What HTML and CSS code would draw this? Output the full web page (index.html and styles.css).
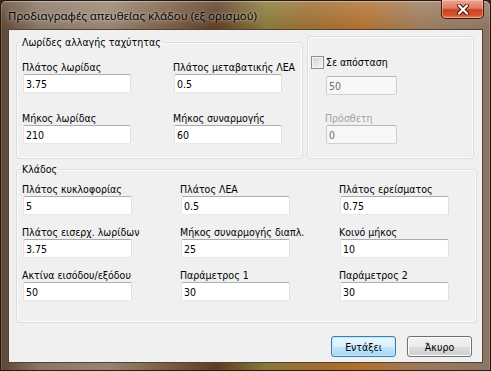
FILE: index.html
```html
<!DOCTYPE html>
<html lang="el">
<head>
    <meta charset="UTF-8">
    <title>Προδιαγραφές απευθείας κλάδου</title>
    <link rel="stylesheet" href="styles.css">
</head>
<body>
    <div class="window">

        <div class="titlebar">
            <span class="title">Προδιαγραφές απευθείας κλάδου (εξ ορισμού)</span>
            <button class="close" type="button">
                <svg width="12" height="11" viewBox="0 0 12 11">
                    <path d="M2 1.5 L10 9.5 M10 1.5 L2 9.5" stroke="#4a1208" stroke-width="4" stroke-linecap="round"/>
                    <path d="M2 1.5 L10 9.5 M10 1.5 L2 9.5" stroke="#ffffff" stroke-width="2.2" stroke-linecap="round"/>
                </svg>
            </button>
        </div>

        <form class="client">

            <div class="top-row">
                <fieldset class="group lanes">
                    <legend>Λωρίδες αλλαγής ταχύτητας</legend>
                    <div class="grid">
                        <label class="field"><span>Πλάτος λωρίδας</span><input type="text" value="3.75"></label>
                        <label class="field"><span>Πλάτος μεταβατικής ΛΕΑ</span><input type="text" value="0.5"></label>
                        <label class="field"><span>Μήκος λωρίδας</span><input type="text" value="210"></label>
                        <label class="field"><span>Μήκος συναρμογής</span><input type="text" value="60"></label>
                    </div>
                </fieldset>

                <fieldset class="group offset">
                    <label class="check"><input type="checkbox"><span>Σε απόσταση</span></label>
                    <input class="dist" type="text" value="50" disabled>
                    <label class="field off"><span>Πρόσθετη</span><input type="text" value="0" disabled></label>
                </fieldset>
            </div>

            <fieldset class="group branch">
                <legend>Κλάδος</legend>
                <div class="grid">
                    <label class="field"><span>Πλάτος κυκλοφορίας</span><input type="text" value="5"></label>
                    <label class="field"><span>Πλάτος ΛΕΑ</span><input type="text" value="0.5"></label>
                    <label class="field"><span>Πλάτος ερείσματος</span><input type="text" value="0.75"></label>
                    <label class="field"><span>Πλάτος εισερχ. λωρίδων</span><input type="text" value="3.75"></label>
                    <label class="field"><span>Μήκος συναρμογής διαπλ.</span><input type="text" value="25"></label>
                    <label class="field"><span>Κοινό μήκος</span><input type="text" value="10"></label>
                    <label class="field"><span>Ακτίνα εισόδου/εξόδου</span><input type="text" value="50"></label>
                    <label class="field"><span>Παράμετρος 1</span><input type="text" value="30"></label>
                    <label class="field"><span>Παράμετρος 2</span><input type="text" value="30"></label>
                </div>
            </fieldset>

            <div class="buttons">
                <button class="btn default" type="button">Εντάξει</button>
                <button class="btn" type="button">Άκυρο</button>
            </div>

        </form>
    </div>
</body>
</html>
```

FILE: styles.css
```css
* {
    box-sizing: border-box;
    margin: 0;
    padding: 0;
}

html,
body {
    width: 491px;
    height: 371px;
    overflow: hidden;
}

body {
    font-family: "DejaVu Sans Condensed", "Liberation Sans", Arial, sans-serif;
    font-size: 10.5px;
    color: #000;
    background: #3a2818;
}

.window {
    width: 491px;
    height: 371px;
    display: flex;
    flex-direction: column;
    border: 1px solid rgba(20, 10, 0, 0.85);
    border-radius: 6px 6px 0 0;
    background:
        linear-gradient(to bottom, rgba(255, 255, 255, 0.18), rgba(255, 255, 255, 0) 28px),
        linear-gradient(90deg, #5e4634 0%, #8a7664 8%, #97836f 22%, #7a5d44 34%, #5c3c24 44%, #867838 54%, #9c6c30 64%, #b0702e 74%, #9a7a5c 86%, #8c7564 100%);
    box-shadow: inset 0 1px 0 rgba(255, 255, 255, 0.35), inset 1px 0 0 rgba(255, 255, 255, 0.15), inset -1px 0 0 rgba(255, 255, 255, 0.15);
}

/* title bar */

.titlebar {
    height: 28px;
    display: flex;
    align-items: flex-start;
    padding-left: 7px;
}

.title {
    margin-top: 7px;
    font-family: "Noto Sans", sans-serif;
    font-size: 11.5px;
    line-height: 15px;
    color: #000;
    text-shadow: 0 0 5px rgba(255, 255, 255, 0.55), 0 0 2px rgba(255, 255, 255, 0.45);
}

.close {
    margin-left: auto;
    margin-right: 6px;
    margin-top: -1px;
    width: 43px;
    height: 19px;
    display: grid;
    place-items: center;
    border: 1px solid #4a140c;
    border-top: none;
    border-radius: 0 0 5px 5px;
    background: linear-gradient(#eca595 0%, #e07a62 45%, #cc3f25 55%, #d4542c 85%, #e98a58 100%);
    box-shadow: inset 0 0 0 1px rgba(255, 220, 200, 0.45);
}

/* client area */

.client {
    flex: 1;
    margin: 0 7px 7px;
    display: flex;
    flex-direction: column;
    padding: 6px 0 0 7px;
    background: #f0f0f0;
    border: 1px solid rgba(40, 25, 10, 0.8);
}

.top-row {
    display: flex;
    gap: 4px;
}

.group {
    border: 1px solid #d5dfe5;
    border-radius: 3px;
    box-shadow: inset 0 0 0 1px rgba(255, 255, 255, 0.7);
    min-width: 0;
}

.group legend {
    margin-left: -1px;
    padding: 0 1px;
    line-height: 13px;
}

.lanes {
    width: 287px;
    height: 123px;
    padding: 12px 0 0 5px;
}

.lanes .grid {
    display: grid;
    grid-template-columns: 151px 151px;
    row-gap: 19px;
}

.offset {
    width: 167px;
    height: 123px;
    padding: 19px 0 0 3px;
    display: flex;
    flex-direction: column;
    align-items: flex-start;
}

.branch {
    width: 461px;
    height: 160px;
    margin-top: 4px;
    padding: 7px 0 0 5px;
}

.branch .grid {
    display: grid;
    grid-template-columns: 158px 159px 1fr;
    row-gap: 11px;
}

.field {
    display: flex;
    flex-direction: column;
    align-items: flex-start;
}

.field span {
    line-height: 13px;
    white-space: nowrap;
}

input[type='text'] {
    width: 108px;
    height: 19px;
    margin-left: 1px;
    padding: 0 2px;
    font: inherit;
    color: #000;
    background: #fff;
    border: 1px solid;
    border-color: #abadb3 #dbdfe6 #e3e9ef #e2e3ea;
    border-radius: 2px;
    outline: none;
}

.branch input[type='text'] {
    width: 109px;
}

input[type='text']:disabled {
    color: #6d6d6d;
    background: #f7f7f7;
    border-color: #b4b7bb #c9ccd0 #cfd2d5 #c9ccd0;
}

.check {
    display: flex;
    align-items: center;
    gap: 2px;
    height: 13px;
    line-height: 13px;
}

.check input {
    appearance: none;
    width: 13px;
    height: 13px;
    border: 1px solid #8e8f8f;
    background: linear-gradient(135deg, #d0d4d9, #f4f4f4);
    box-shadow: inset 0 0 0 1px #f4f4f4;
}

.dist {
    margin: 7px 0 0 15px;
}

input.dist[type='text'] {
    width: 71px;
    margin-left: 15px;
}

.offset .off {
    margin: 17px 0 0 14px;
}

.offset .off input[type='text'] {
    width: 71px;
}

.off span {
    color: #a3a3a3;
}

/* buttons */

.buttons {
    display: flex;
    justify-content: flex-end;
    gap: 11px;
    margin-top: 13px;
    padding-right: 10px;
}

.btn {
    width: 65px;
    height: 21px;
    font: inherit;
    color: #000;
    border: 1px solid #707070;
    border-radius: 3px;
    background: linear-gradient(#f2f2f2 0%, #ebebeb 50%, #dddddd 50%, #cfcfcf 100%);
    box-shadow: inset 0 0 0 1px #fcfcfc;
}

.btn.default {
    border-color: #3c7fb1;
    background: linear-gradient(#eaf6fd 0%, #d9f0fc 50%, #bee6fd 50%, #a7d9f5 100%);
    box-shadow: inset 0 0 0 1px #c4e5f6;
}
```
